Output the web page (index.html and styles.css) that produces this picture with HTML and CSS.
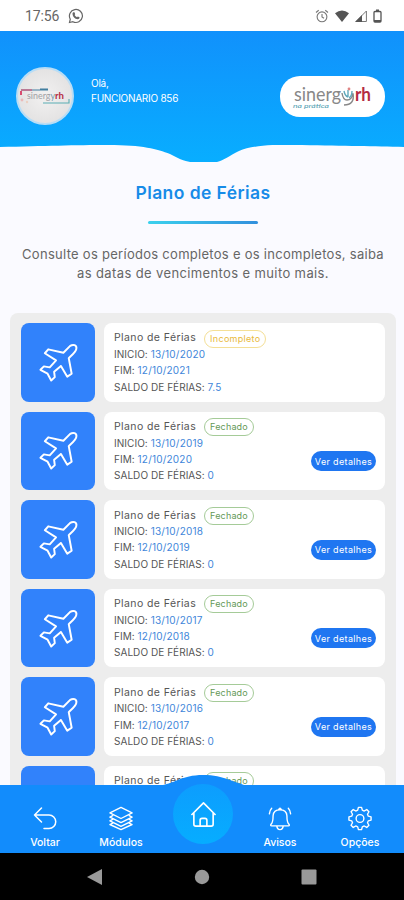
FILE: index.html
```html
<!DOCTYPE html>
<html lang="pt-BR">
<head>
    <meta charset="UTF-8">
    <meta name="viewport" content="width=device-width, initial-scale=1.0">
    <title>Plano de Férias</title>
    <link rel="stylesheet" href="styles.css">
</head>
<body>

<!-- Shared icons -->
<svg class="defs" width="0" height="0">
    <symbol id="plane" viewBox="0 0 40 40">
        <path d="M32 3 C35 1 39 2 38.3 6 C38 9 33 13 30.5 15.5 L33.5 31.5 L29 34.5 L22.5 23.5 L15.5 29.5 L16.2 35 L12.5 38.5 L8.8 31.5 L1.5 27.5 L5 24 L11 25 L17.5 17.8 L6 10.5 L9.5 6.5 L25 10 Z"/>
    </symbol>
</svg>

<div class="phone">
    <!-- Status bar -->
    <div class="status-bar">
        <span class="clock">17:56</span>
        <svg class="whatsapp" width="16" height="16" viewBox="0 0 16 16">
            <path d="M1.5 14.5 L2.3 11.2 A6.5 6.5 0 1 1 4.9 13.7 Z" fill="none" stroke="#666" stroke-width="1.2"/>
            <path d="M5.2 4.3 L6.5 4.3 L7.2 6.2 L6.6 7 Q7.4 8.5 9 9.3 L9.8 8.5 L11.6 9.3 Q11.6 11.3 9.7 11.3 Q5 10.5 4.5 6 Q4.4 4.9 5.2 4.3 Z" fill="#666"/>
        </svg>
        <div class="status-icons">
            <svg width="14" height="14" viewBox="0 0 14 14" fill="none" stroke="#777" stroke-width="1.1">
                <circle cx="7" cy="7.8" r="4.9"/>
                <path d="M7 5 V8 L9 9.3 M1 3.5 L3.7 1.3 M13 3.5 L10.3 1.3"/>
            </svg>
            <svg width="14" height="12" viewBox="0 0 14 12"><path d="M0 3.2 Q7 -2 14 3.2 L7 12 Z" fill="#555"/></svg>
            <svg width="12" height="12" viewBox="0 0 12 12">
                <path d="M1 11.5 L11.4 1 V11.5 Z" fill="none" stroke="#777"/>
                <path d="M0 12 L7 5 V12 Z" fill="#555"/>
            </svg>
            <svg width="9" height="14" viewBox="0 0 9 14">
                <rect x="1" y="2.5" width="7" height="10.5" rx="1" fill="none" stroke="#555" stroke-width="1.3"/>
                <path d="M3 0.5 H6 V2.5 H3 Z M1 11 H8 V13 H1 Z" fill="#555"/>
            </svg>
        </div>
    </div>

    <!-- Header -->
    <header class="header">
        <svg class="header-wave" width="404" height="18" viewBox="0 0 404 18">
            <path d="M0 2 C45 1 75 0 108 0 C143 0 157 4 170 9 C181 15 187 17 192 17 H217 C224 15 229 11 239 6 C253 0 278 -1 302 0 C345 1 374 1 404 2 V18 H0 Z" fill="#fafaff"/>
        </svg>
        <div class="avatar">
            <svg width="54" height="54" viewBox="0 0 54 54">
                <path d="M3 21 H30 M22 20 H30" stroke="#437fa0" stroke-width="1.1"/>
                <path d="M3 21 H14" stroke="#d94b70" stroke-width="1.1"/>
                <path d="M3 22 V26" stroke="#d94b70" stroke-width="2"/>
                <path d="M25 34 H51 V30" fill="none" stroke="#5baeb3" stroke-width="1.1"/>
                <circle cx="4" cy="31" r="1.4" fill="#eab9b9"/>
                <circle cx="9" cy="33" r="1.2" fill="#eccfc0"/>
                <text x="9" y="30" textLength="28" lengthAdjust="spacingAndGlyphs" class="brand-small">sinerg<tspan fill="#769cad">y</tspan></text>
                <text x="37" y="30" textLength="9" lengthAdjust="spacingAndGlyphs" class="brand-small brand-rh">rh</text>
            </svg>
        </div>
        <div class="greeting">Olá,<br>FUNCIONARIO 856</div>
        <div class="brand">
            <svg width="105" height="41" viewBox="0 0 105 41">
                <text x="14" y="25" textLength="47" lengthAdjust="spacingAndGlyphs" class="brand-name">sinerg</text>
                <path d="M62 17 Q63 24 67 24 Q72 24 73 17 M73 17 Q75 29 64 29" fill="none" stroke="#888" stroke-width="1.4"/>
                <path d="M64 15 Q65 20 68 21 M68 14 V21 M72 15 Q72 20 69 22" fill="none" stroke="#61a9bb" stroke-width="1.4"/>
                <circle cx="69" cy="13" r="1.4" fill="#df8585"/>
                <text x="75" y="25" textLength="16" lengthAdjust="spacingAndGlyphs" class="brand-name brand-rh">rh</text>
                <text x="13" y="32" textLength="36" lengthAdjust="spacingAndGlyphs" class="brand-tag">na prática</text>
            </svg>
        </div>
    </header>

    <!-- Content -->
    <main class="content">
        <h1>Plano de Férias</h1>
        <div class="divider"></div>
        <p class="intro">Consulte os períodos completos e os incompletos, saiba<br><span>as datas de vencimentos e muito mais.</span></p>

        <div class="plan-list">
            <div class="plan">
                <div class="plan-icon"><svg><use href="#plane"/></svg></div>
                <div class="plan-card">
                    <div class="plan-title"><span>Plano de Férias</span><span class="tag incomplete">Incompleto</span></div>
                    <div>INICIO: <b>13/10/2020</b></div>
                    <div>FIM: <b>12/10/2021</b></div>
                    <div>SALDO DE FÉRIAS: <b>7.5</b></div>
                </div>
            </div>
            <div class="plan">
                <div class="plan-icon"><svg><use href="#plane"/></svg></div>
                <div class="plan-card">
                    <div class="plan-title"><span>Plano de Férias</span><span class="tag">Fechado</span></div>
                    <div>INICIO: <b>13/10/2019</b></div>
                    <div>FIM: <b>12/10/2020</b></div>
                    <div>SALDO DE FÉRIAS: <b>0</b></div>
                    <button>Ver detalhes</button>
                </div>
            </div>
            <div class="plan">
                <div class="plan-icon"><svg><use href="#plane"/></svg></div>
                <div class="plan-card">
                    <div class="plan-title"><span>Plano de Férias</span><span class="tag">Fechado</span></div>
                    <div>INICIO: <b>13/10/2018</b></div>
                    <div>FIM: <b>12/10/2019</b></div>
                    <div>SALDO DE FÉRIAS: <b>0</b></div>
                    <button>Ver detalhes</button>
                </div>
            </div>
            <div class="plan">
                <div class="plan-icon"><svg><use href="#plane"/></svg></div>
                <div class="plan-card">
                    <div class="plan-title"><span>Plano de Férias</span><span class="tag">Fechado</span></div>
                    <div>INICIO: <b>13/10/2017</b></div>
                    <div>FIM: <b>12/10/2018</b></div>
                    <div>SALDO DE FÉRIAS: <b>0</b></div>
                    <button>Ver detalhes</button>
                </div>
            </div>
            <div class="plan">
                <div class="plan-icon"><svg><use href="#plane"/></svg></div>
                <div class="plan-card">
                    <div class="plan-title"><span>Plano de Férias</span><span class="tag">Fechado</span></div>
                    <div>INICIO: <b>13/10/2016</b></div>
                    <div>FIM: <b>12/10/2017</b></div>
                    <div>SALDO DE FÉRIAS: <b>0</b></div>
                    <button>Ver detalhes</button>
                </div>
            </div>
            <div class="plan">
                <div class="plan-icon"></div>
                <div class="plan-card">
                    <div class="plan-title"><span>Plano de Férias</span><span class="tag">Fechado</span></div>
                </div>
            </div>
        </div>
    </main>

    <!-- Bottom menu -->
    <nav class="menu">
        <svg class="menu-bump" width="92" height="12" viewBox="0 0 92 12"><path d="M0 12 C18 10 24 1 46 1 C68 1 76 9 92 12 Z" fill="#128cfc"/></svg>
        <a class="menu-item back">
            <svg width="24" height="24" viewBox="0 0 24 24"><path d="M8.5 1.5 L1.5 8.5 L8.5 15.5 M1.5 8.5 H16 A6.7 6.7 0 0 1 16 22 H11"/></svg>
            <span>Voltar</span>
        </a>
        <a class="menu-item modules">
            <svg width="24" height="24" viewBox="0 0 26 26"><path d="M13 1 L25 7 L13 13 L1 7 Z M4 10 L1 11.5 L13 17.5 L25 11.5 L22 10 M4 14 L1 15.5 L13 21.5 L25 15.5 L22 14 M4 18 L1 19.5 L13 25 L25 19.5 L22 18"/></svg>
            <span>Módulos</span>
        </a>
        <a class="menu-home">
            <svg width="27" height="27" viewBox="0 0 28 28"><path d="M1.5 14.5 L14 2 L26.5 14.5 M4 12 V24 Q4 26 6 26 H22 Q24 26 24 24 V12 M10.5 26 V20 Q10.5 18 12.5 18 H15.5 Q17.5 18 17.5 20 V26"/></svg>
        </a>
        <a class="menu-item alerts">
            <svg width="24" height="24" viewBox="0 0 26 26"><path d="M4 21 H22 Q24 21 22.5 19 Q20.5 17 20.5 10 Q20 3.5 13 3.5 Q6 3.5 5.5 10 Q5.5 17 3.5 19 Q2 21 4 21 Z M9.5 21 Q10 25 13 25 Q16 25 16.5 21 M11.5 3.5 Q13 0 14.5 3.5 M4 2 Q2 4 1.5 8 M22 2 Q24 4 24.5 8"/></svg>
            <span>Avisos</span>
        </a>
        <a class="menu-item options">
            <svg width="24" height="24" viewBox="0 0 26 26"><path d="M10.5 4 L11.3 1 H14.7 L15.5 4 L17.6 4.9 L20.3 3.3 L22.7 5.7 L21.1 8.4 L22 10.5 L25 11.3 V14.7 L22 15.5 L21.1 17.6 L22.7 20.3 L20.3 22.7 L17.6 21.1 L15.5 22 L14.7 25 H11.3 L10.5 22 L8.4 21.1 L5.7 22.7 L3.3 20.3 L4.9 17.6 L4 15.5 L1 14.7 V11.3 L4 10.5 L4.9 8.4 L3.3 5.7 L5.7 3.3 L8.4 4.9 Z"/><circle cx="13" cy="13" r="4.2"/></svg>
            <span>Opções</span>
        </a>
    </nav>

    <!-- Android buttons -->
    <div class="android-bar">
        <svg width="16" height="18" viewBox="0 0 16 18"><path d="M0 9 L15 1 V17 Z"/></svg>
        <svg width="16" height="16" viewBox="0 0 16 16"><circle cx="8" cy="8" r="7.2"/></svg>
        <svg width="16" height="16" viewBox="0 0 16 16"><rect x=".5" y=".5" width="15" height="15" rx="1"/></svg>
    </div>
</div>

</body>
</html>
```
FILE: styles.css
```css
* {
    box-sizing: border-box;
}
body {
    margin: 0;
    font-family: Inter, "Open Sans", sans-serif;
    background-color: #fafaff;
    color: #555;
}
.defs {
    position: absolute;
}
.phone {
    width: 404px;
    height: 900px;
    display: flex;
    flex-direction: column;
    overflow: hidden;
}
.status-bar {
    height: 31px;
    flex: none;
    display: flex;
    align-items: center;
    padding: 1px 22px 0 25px;
    background: #fff;
}
.clock {
    font-family: Roboto, sans-serif;
    font-size: 14px;
    color: #666;
    width: 43px;
    white-space: nowrap;
    letter-spacing: -.1px;
}
.status-icons {
    display: flex;
    align-items: center;
    gap: 6px;
    margin-left: auto;
}
.header {
    position: relative;
    height: 132px;
    flex: none;
    display: flex;
    align-items: flex-start;
    padding: 36px 19px 0 16px;
    background: linear-gradient(#1191fc, #08aeff);
}
.header-wave {
    position: absolute;
    left: 0;
    bottom: 0;
    height: 18px;
}
.avatar {
    width: 58px;
    height: 58px;
    border: 2px solid #b9ddf5;
    border-radius: 50%;
    background: radial-gradient(#f2f1f1, #dedddd);
}
.avatar svg {
    display: block;
}
.greeting {
    margin: 9px 0 0 17px;
    color: #fff;
    font-size: 10px;
    line-height: 15px;
    letter-spacing: -.26px;
}
.brand {
    width: 105px;
    height: 41px;
    margin: 9px 0 0 auto;
    border-radius: 20px;
    background: #fff;
}
.brand-small {
    font-family: Lato, sans-serif;
    font-size: 9px;
    fill: #a1a1a4;
}
.brand-name {
    font-family: Lato, sans-serif;
    font-size: 19px;
    fill: #888;
}
.brand-rh {
    fill: #b52b42;
    font-weight: bold;
}
.brand-tag {
    font-family: Lato, sans-serif;
    font-size: 6px;
    font-style: italic;
    fill: #4d9cb0;
}
.content {
    flex: 1;
    min-height: 0;
    overflow: hidden;
    padding: 19px 8px 0 10px;
}
h1 {
    margin: 0;
    font-size: 17.5px;
    line-height: 22px;
    font-weight: 600;
    letter-spacing: .42px;
    text-align: center;
    color: #178be8;
}
.divider {
    width: 110px;
    height: 3px;
    margin: 17px auto 21px;
    border-radius: 2px;
    background: linear-gradient(90deg, #3bd1ed, #318fdd);
}
.intro {
    margin: 0;
    font-size: 13px;
    line-height: 19px;
    letter-spacing: .28px;
    text-align: center;
    white-space: nowrap;
    color: #666;
}
.intro span {
    letter-spacing: .38px;
}
.plan-list {
    margin-top: 30px;
    padding: 10px 11px;
    border-radius: 8px;
    background: #ededed;
    display: flex;
    flex-direction: column;
    gap: 10px;
}
.plan {
    display: flex;
    gap: 9px;
    height: 78.6px;
    flex: none;
}
.plan-icon {
    width: 74px;
    border-radius: 8px;
    background: #3182fb;
    display: flex;
    align-items: center;
    justify-content: center;
}
.plan-icon svg {
    width: 39px;
    height: 39px;
    fill: none;
    stroke: #fff;
    stroke-width: 2;
    stroke-linejoin: round;
}
.plan-card {
    position: relative;
    flex: 1;
    padding: 8px 10px;
    border-radius: 8px;
    background: #fff;
    font-size: 10px;
    line-height: 16.3px;
    letter-spacing: .05px;
}
.plan-card b {
    font-weight: normal;
    letter-spacing: .2px;
    color: #4186da;
}
.plan-title {
    display: flex;
    align-items: center;
    height: 15px;
    gap: 8px;
    font-size: 10.5px;
    letter-spacing: .4px;
}
.tag {
    height: 18px;
    padding: 0 5px;
    border: 1px solid #a5cb98;
    border-radius: 9px;
    color: #659956;
    font-size: 9px;
    line-height: 16px;
    letter-spacing: .15px;
}
.tag.incomplete {
    border-color: #f4df96;
    color: #e8b93c;
    letter-spacing: .3px;
}
.plan-card button {
    position: absolute;
    right: 9px;
    bottom: 19px;
    width: 65px;
    height: 20px;
    padding: 0;
    border: none;
    border-radius: 10px;
    background: #1f76f1;
    color: #fff;
    font-family: inherit;
    font-size: 9px;
    letter-spacing: .35px;
}
.menu {
    position: relative;
    height: 68px;
    flex: none;
    display: grid;
    grid-template-columns: 90px 62px 102px 52px 108px;
    background: #128cfc;
}
.menu-bump {
    position: absolute;
    left: 157px;
    top: -11px;
}
.menu-item {
    display: flex;
    flex-direction: column;
    align-items: center;
    padding-top: 21px;
    color: #fff;
    font-size: 10.5px;
    font-weight: 500;
}
.menu-item svg {
    height: 25px;
    fill: none;
    stroke: #fff;
    stroke-width: 1.5;
    stroke-linejoin: round;
    stroke-linecap: round;
}
.menu-item span {
    margin-top: 5px;
    line-height: 14px;
}
.menu-home {
    position: relative;
    width: 60px;
    height: 60px;
    margin: -1px auto 0;
    border-radius: 50%;
    background: linear-gradient(#0d9dfe, #06adff);
    display: flex;
    align-items: center;
    justify-content: center;
}
.menu-home svg {
    fill: none;
    stroke: #fff;
    stroke-width: 1.7;
    stroke-linejoin: round;
}
.modules,
.alerts {
    white-space: nowrap;
}
.android-bar {
    height: 47px;
    flex: none;
    display: flex;
    align-items: center;
    justify-content: center;
    gap: 91px;
    background: #000;
}
.android-bar svg {
    fill: #999;
}
```
